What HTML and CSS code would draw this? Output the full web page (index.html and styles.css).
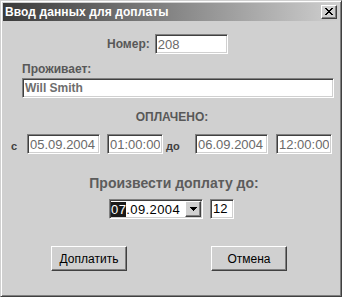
FILE: index.html
```html
<!DOCTYPE html>
<html lang="ru">
<head>
    <meta charset="UTF-8">
    <title>Ввод данных для доплаты</title>
    <link rel="stylesheet" href="styles.css">
</head>
<body>
    <!-- Dialog window -->
    <div class="window">
        <div class="titlebar">
            <span class="title">Ввод данных для доплаты</span>
            <button class="close-btn" type="button">
                <svg width="8" height="7" viewBox="0 0 8 7" shape-rendering="crispEdges">
                    <path d="M0 0h2v1h-2zM6 0h2v1h-2zM1 1h2v1h-2zM5 1h2v1h-2zM2 2h4v1h-4zM3 3h2v1h-2zM2 4h4v1h-4zM1 5h2v1h-2zM5 5h2v1h-2zM0 6h2v1h-2zM6 6h2v1h-2z" fill="#000"/>
                </svg>
            </button>
        </div>

        <div class="content">
            <!-- Room number -->
            <div class="number-row">
                <label class="label" for="room">Номер:</label>
                <input class="field field-number" id="room" value="208">
            </div>

            <!-- Resident -->
            <label class="label resident-label" for="resident">Проживает:</label>
            <input class="field field-resident" id="resident" value="Will Smith">

            <!-- Paid period -->
            <div class="section-title">ОПЛАЧЕНО:</div>
            <div class="period-row">
                <span class="small-label label-from">с</span>
                <input class="field field-date" value="05.09.2004">
                <input class="field field-time" value="01:00:00">
                <span class="small-label label-to">до</span>
                <input class="field field-date" value="06.09.2004">
                <input class="field field-time field-last" value="12:00:00">
            </div>

            <!-- Pay until -->
            <div class="pay-title">Произвести доплату до:</div>
            <div class="picker-row">
                <div class="field picker">
                    <span class="picker-text"><span class="selected">07</span>.09.2004</span>
                    <span class="drop-btn">
                        <svg width="7" height="4" viewBox="0 0 7 4" shape-rendering="crispEdges">
                            <path d="M0 0h7v1h-7zM1 1h5v1h-5zM2 2h3v1h-3zM3 3h1v1h-1z" fill="#000"/>
                        </svg>
                    </span>
                </div>
                <div class="field hour">12</div>
            </div>

            <!-- Buttons -->
            <div class="buttons-row">
                <button class="btn" type="button">Доплатить</button>
                <button class="btn" type="button">Отмена</button>
            </div>
        </div>
    </div>
</body>
</html>
```

FILE: styles.css
```css
/* General Styles */
* {
    margin: 0;
    padding: 0;
    box-sizing: border-box;
}

body {
    font-family: 'Liberation Sans', Arial, sans-serif;
    background: #d0d0d0;
}

/* Window frame */
.window {
    width: 342px;
    height: 297px;
    background: #d0d0d0;
    border: 1px solid;
    border-color: #d0d0d0 #404040 #404040 #d0d0d0;
    box-shadow: inset 1px 1px #fff, inset -1px -1px #808080;
    padding: 2px;
    display: flex;
    flex-direction: column;
}

.titlebar {
    height: 18px;
    background: linear-gradient(90deg, #3a3a3a, #cfcfcf);
    display: flex;
    align-items: center;
    justify-content: space-between;
    padding: 0 2px 0 2px;
}

.title {
    color: #fff;
    font-weight: bold;
    font-size: 12px;
    line-height: 18px;
    letter-spacing: 0.1px;
}

.close-btn {
    width: 16px;
    height: 14px;
    background: #d0d0d0;
    border: 1px solid;
    border-color: #fff #404040 #404040 #fff;
    box-shadow: inset -1px -1px #808080;
    display: flex;
    align-items: center;
    justify-content: center;
    padding: 0 1px 1px 0;
}

.content {
    display: flex;
    flex-direction: column;
    padding: 13px 0 0 16px;
}

/* Labels */
.label {
    color: #585858;
    font-weight: bold;
    font-size: 12px;
    line-height: 14px;
}

.small-label {
    color: #404040;
    font-weight: bold;
    font-size: 11px;
    line-height: 12px;
    align-self: flex-end;
    padding-bottom: 2px;
}

.label-from {
    width: 24px;
    padding-left: 8px;
}

.label-to {
    width: 32px;
    padding-left: 3px;
}

.section-title {
    margin-top: 12px;
    text-align: center;
    color: #585858;
    font-weight: bold;
    font-size: 12px;
    line-height: 14px;
    padding-right: 14px;
}

.pay-title {
    margin-top: 21px;
    text-align: center;
    color: #5c5c5c;
    font-weight: bold;
    font-size: 14px;
    line-height: 16px;
    padding-right: 10px;
}

/* Sunken fields */
.field {
    height: 20px;
    background: #fff;
    border: 1px solid;
    border-color: #808080 #fff #fff #808080;
    box-shadow: inset 1px 1px #404040, inset -1px -1px #d0d0d0;
    font-family: 'Liberation Sans', Arial, sans-serif;
    font-size: 13px;
    color: #6a6a6a;
    padding: 0 2px;
    outline: none;
}

.number-row {
    display: flex;
    align-items: center;
    gap: 5px;
    padding-left: 88px;
}

.field-number {
    width: 73px;
}

.resident-label {
    margin-top: 8px;
    padding-left: 3px;
}

.field-resident {
    margin-top: 2px;
    margin-left: 3px;
    width: 312px;
    font-weight: bold;
    font-size: 12px;
    color: #6e6e6e;
}

.period-row {
    margin-top: 10px;
    display: flex;
    align-items: stretch;
    margin-left: -16px;
}

.field-date {
    width: 73px;
}

.field-time {
    width: 56px;
    margin-left: 7px;
}

.field-last {
    margin-left: 8px;
}

/* Date picker */
.picker-row {
    margin-top: 8px;
    display: flex;
    justify-content: center;
    gap: 7px;
    padding-right: 15px;
}

.picker {
    width: 94px;
    display: flex;
    align-items: center;
    justify-content: space-between;
    padding: 0 1px 0 1px;
    color: #000;
}

.picker-text {
    letter-spacing: 0.4px;
}

.selected {
    background: #1a1a1a;
    color: #fff;
}

.drop-btn {
    width: 16px;
    height: 16px;
    background: #d0d0d0;
    border: 1px solid;
    border-color: #fff #404040 #404040 #fff;
    box-shadow: inset -1px -1px #808080;
    display: flex;
    align-items: center;
    justify-content: center;
}

.hour {
    width: 24px;
    color: #000;
    line-height: 18px;
}

/* Buttons */
.buttons-row {
    margin-top: 27px;
    display: flex;
    gap: 84px;
    padding-left: 32px;
}

.btn {
    width: 76px;
    height: 25px;
    background: #d0d0d0;
    border: 1px solid;
    border-color: #fff #404040 #404040 #fff;
    box-shadow: inset -1px -1px #808080;
    font-family: 'Liberation Sans', Arial, sans-serif;
    font-size: 12px;
    color: #000;
}
```
